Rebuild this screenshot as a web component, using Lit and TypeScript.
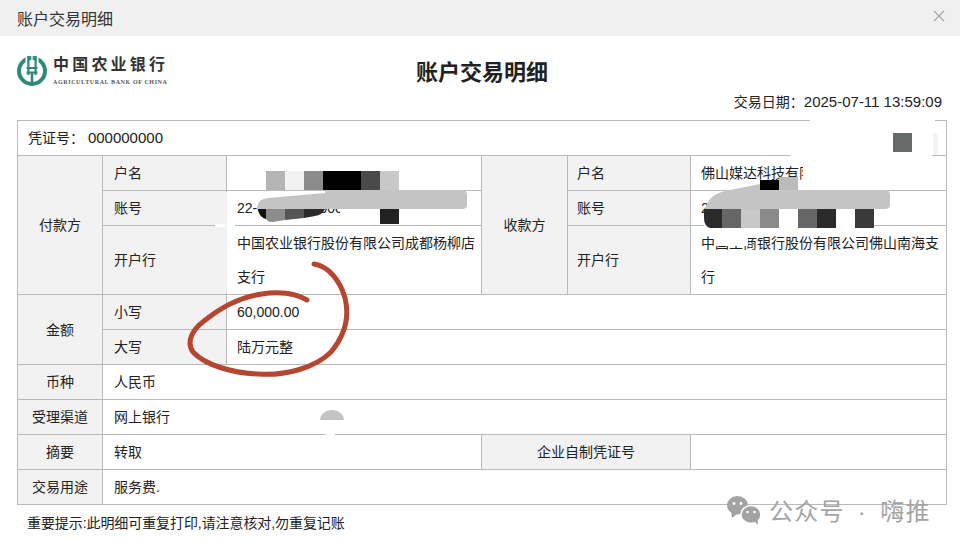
import { LitElement, html, css, svg } from "lit";
import { customElement } from "lit/decorators.js";

type R = [number, number, number, number, string];
const patches: R[] = [
  [227, 156, 254, 34, "#fff"],
  [215, 224, 20, 3, "#fff"],
  [810, 119, 125, 36, "#fff"],
  [790, 154, 142, 3, "#fff"],
  [933, 133, 5, 22, "#f3f3f3"],
  [803, 156, 143, 32, "#fff"],
  [340, 207, 140, 17, "#fff"],
  [704, 224, 170, 5, "#fff"],
  [714, 233, 34, 13, "#fff"],
  [748, 233, 15, 5, "#fff"],
  [225, 192, 2, 101, "#f2f2f2"],
  [266, 171, 19, 19, "#b5b5b5"],
  [285, 171, 19, 19, "#f2f2f2"],
  [304, 171, 19, 19, "#8c8c8c"],
  [323, 171, 38, 19, "#000"],
  [361, 171, 19, 19, "#4a4a4a"],
  [380, 171, 19, 19, "#c8c8c8"],
  [380, 209, 19, 15, "#222"],
  [760, 180, 19, 10, "#000"],
  [779, 177, 19, 13, "#bbb"],
  [722, 209, 19, 19, "#666"],
  [741, 209, 19, 19, "#c8c8c8"],
  [760, 209, 19, 19, "#8a8a8a"],
  [798, 209, 19, 19, "#666"],
  [817, 209, 19, 19, "#2a2a2a"],
  [855, 209, 19, 19, "#3a3a3a"],
  [893, 133, 19, 19, "#666a68"],
];

@customElement("app-root")
export class AppRoot extends LitElement {
  static styles = css`
    :host {
      display: block;
      width: 960px;
      height: 549px;
      background: #fff;
      color: #222;
      font-family: "Liberation Sans", "Noto Sans CJK SC", sans-serif;
      font-size: 14px;
    }
    .page { position: relative; width: 960px; height: 549px; overflow: hidden; }
    .titlebar {
      height: 36px;
      background: #f0f0f0;
      display: flex;
      align-items: center;
      justify-content: space-between;
      padding: 0 15px 0 17px;
      font-size: 16px;
      color: #333;
    }
    .close { width: 12px; height: 12px; display: block; margin-bottom: 4px; }
    .head {
      height: 84px;
      padding: 0 17px 0 16px;
      display: grid;
      grid-template-columns: 1fr auto 1fr;
    }
    .logo { display: flex; align-items: flex-start; gap: 5px; padding-top: 18px; }
    .logo svg { width: 32px; height: 32px; flex: none; margin-top: 1px; }
    .logo-text { display: flex; flex-direction: column; }
    .cn { font-family: "Liberation Serif", "Noto Sans CJK SC", serif; font-size: 16px; font-weight: 700; letter-spacing: 3.2px; line-height: 22px; color: #333; white-space: nowrap; }
    .en { font-family: "Liberation Serif", serif; font-size: 6px; font-weight: 700; letter-spacing: 0.62px; line-height: 8px; color: #555; white-space: nowrap; margin-top: 2px; }
    .title { font-size: 22px; font-weight: 700; color: #222; padding: 22px 0 0 5px; line-height: 30px; }
    .date { text-align: right; padding: 55px 1px 0 0; line-height: 22px; white-space: nowrap; }
    .num { font-size: 15px; }
    table {
      margin-left: 17px;
      width: 929px;
      table-layout: fixed;
      border-collapse: collapse;
    }
    td { border: 1px solid #b9b9b9; height: 34px; padding: 0 5px 0 11px; line-height: 34px; box-sizing: content-box; }
    .l { background: #f2f2f2; }
    .lr { background: #f2f2f2; padding-left: 9px; }
    .c { background: #f2f2f2; text-align: center; padding: 0; }
    .v { padding-left: 10px; white-space: normal; }
    .acct { white-space: nowrap; overflow: hidden; }
    .voucher { padding-left: 10px; }
    .note { padding: 8px 0 0 27px; line-height: 20px; letter-spacing: -0.08px; }
    .overlay { position: absolute; left: 0; top: 0; pointer-events: none; }
    .mark {
      position: absolute;
      left: 727px;
      top: 493px;
      display: flex;
      align-items: center;
      gap: 8px;
      color: #a3a3a3;
      font-size: 24px;
      line-height: 38px;
      letter-spacing: 1.3px;
      word-spacing: 5px;
      white-space: nowrap;
    }
    .mark svg { width: 34px; height: 30px; flex: none; margin-top: -2px; }
  `;

  render() {
    return html`
      <div class="page">
        <div class="titlebar">
          <span>账户交易明细</span>
          <svg class="close" viewBox="0 0 12 12"><path d="M1 1L11 11M11 1L1 11" stroke="#a8a8a8" stroke-width="1.2" fill="none"/></svg>
        </div>
        <div class="head">
          <div class="logo">
            <svg viewBox="0 0 32 32">
              <circle cx="16" cy="16" r="13" fill="none" stroke="#2f8a78" stroke-width="4"/>
              <path d="M10.5 0v8M21.5 0v8" stroke="#fff" stroke-width="2"/>
              <path d="M12.4 1v19M19.6 1v19" stroke="#2f8a78" stroke-width="2.2" fill="none"/>
              <path d="M10.5 13h11M10.5 17.5h11" stroke="#2f8a78" stroke-width="2"/>
              <path d="M16 1v11" stroke="#fff" stroke-width="1.4"/>
              <path d="M16 18v13" stroke="#2f8a78" stroke-width="2.6"/>
            </svg>
            <div class="logo-text">
              <span class="cn">中国农业银行</span>
              <span class="en">AGRICULTURAL BANK OF CHINA</span>
            </div>
          </div>
          <div class="title">账户交易明细</div>
          <div class="date">交易日期：<span class="num">2025-07-11 13:59:09</span></div>
        </div>
        <table>
          <colgroup>
            <col style="width:85px"/><col style="width:124px"/><col style="width:255px"/>
            <col style="width:86px"/><col style="width:123px"/><col style="width:256px"/>
          </colgroup>
          <tr><td colspan="6" class="voucher">凭证号：&nbsp;<span class="num">000000000</span></td></tr>
          <tr>
            <td rowspan="3" class="c">付款方</td><td class="l">户名</td><td class="v"></td>
            <td rowspan="3" class="c">收款方</td><td class="lr">户名</td><td class="v">佛山媒达科技有限公司</td>
          </tr>
          <tr><td class="l">账号</td><td class="v acct">22-00000000000000</td><td class="lr">账号</td><td class="v">2</td></tr>
          <tr>
            <td class="l">开户行</td><td class="v">中国农业银行股份有限公司成都杨柳店支行</td>
            <td class="lr">开户行</td><td class="v">中国工商银行股份有限公司佛山南海支行</td>
          </tr>
          <tr><td rowspan="2" class="c">金额</td><td class="l">小写</td><td colspan="4" class="v">60,000.00</td></tr>
          <tr><td class="l">大写</td><td colspan="4" class="v">陆万元整</td></tr>
          <tr><td class="c">币种</td><td colspan="5">人民币</td></tr>
          <tr><td class="c">受理渠道</td><td colspan="5">网上银行</td></tr>
          <tr>
            <td class="c">摘要</td><td colspan="2">转取</td>
            <td colspan="2" class="c">企业自制凭证号</td><td></td>
          </tr>
          <tr><td class="c">交易用途</td><td colspan="5">服务费.</td></tr>
        </table>
        <div class="note">重要提示:此明细可重复打印,请注意核对,勿重复记账</div>

        <svg class="overlay" width="960" height="549" viewBox="0 0 960 549">
          ${patches.map(([x, y, w, h, f]) => svg`<rect x=${x} y=${y} width=${w} height=${h} fill=${f}/>`)}
          <path d="M258 206Q258 199 268 198L325 193V190H462Q467 190 467 195V205Q467 209 462 209H258Z" fill="#c4c4c4"/>
          <path d="M258 209H266V219Q259 217 258 209Z" fill="#111"/>
          <path d="M266 209H285V220L272 222Q268 222 266 219Z" fill="#8c8c8c"/>
          <path d="M285 209H304V218L285 220Z" fill="#555"/>
          <path d="M304 209H325Q322 215 315 216L304 218Z" fill="#2a2a2a"/>
          <path d="M705 210Q708 193 730 190L760 184V190H885Q890 190 890 195V205Q890 209 885 209H705Z" fill="#c4c4c4"/>
          <path d="M704 209H722V228H710Q704 226 704 218Z" fill="#2a2a2a"/>
          <path d="M320 420A12 10 0 0 1 344 420Z" fill="#c4c4c4"/>
          <ellipse cx="330" cy="428" rx="8" ry="8" fill="#fff"/>
          <path d="M314 264C328 266 340 280 345 298C350 318 345 335 331 352C315 368 285 376 258 374C232 373 205 365 193 352C186 342 192 330 204 321C220 308 240 297 262 294C278 291 295 293 307 300" fill="none" stroke="#b5462f" stroke-width="5" stroke-linecap="round"/>
        </svg>

        <div class="mark">
          <svg viewBox="0 0 34 30">
            <ellipse cx="10.5" cy="9.2" rx="10.5" ry="9.2" fill="#a3a3a3"/>
            <path d="M4 15l1 7 5-4z" fill="#a3a3a3"/>
            <ellipse cx="24" cy="18.5" rx="10" ry="9" fill="#a3a3a3" stroke="#fff" stroke-width="1.5"/>
            <path d="M27 25l4 4-.5-6z" fill="#a3a3a3"/>
            <circle cx="7" cy="7.5" r="1.4" fill="#fff"/><circle cx="14" cy="7.5" r="1.4" fill="#fff"/>
            <circle cx="20.5" cy="16" r="1.3" fill="#fff"/><circle cx="27.5" cy="16" r="1.3" fill="#fff"/>
          </svg>
          <span>公众号 · 嗨推</span>
        </div>
      </div>
    `;
  }
}
